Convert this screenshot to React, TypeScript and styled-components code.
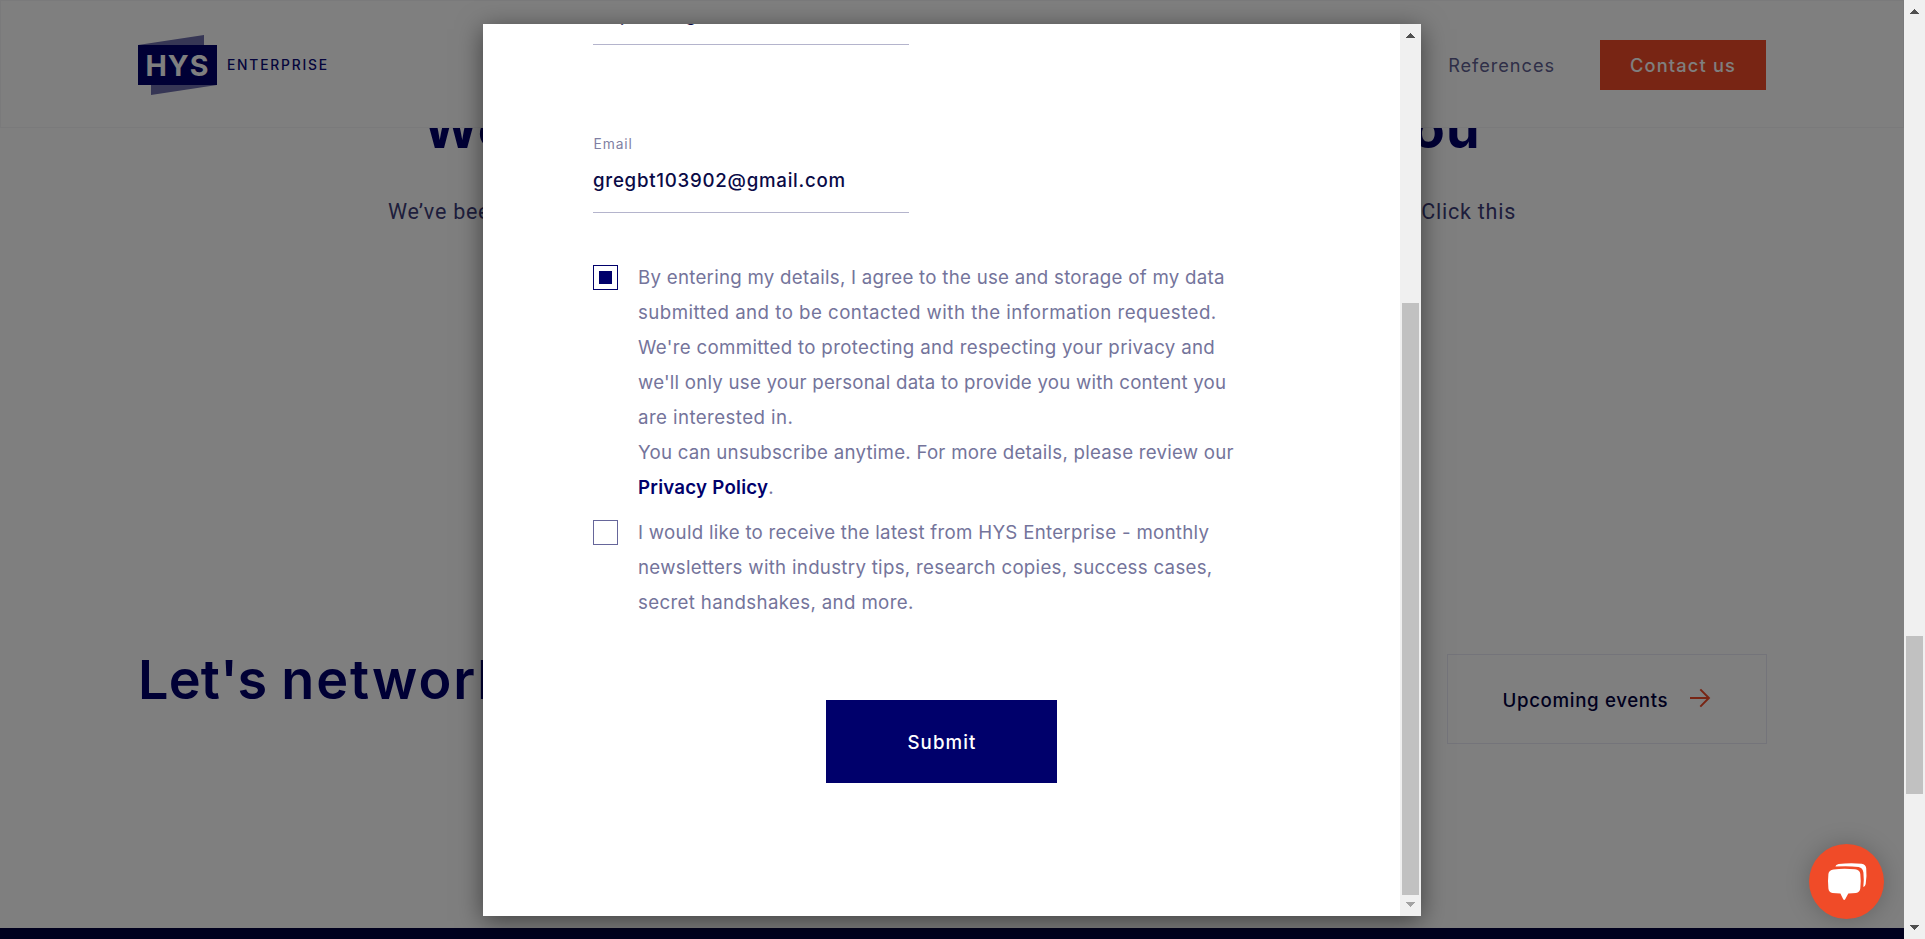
import React from "react";
import styled, { createGlobalStyle } from "styled-components";

const GlobalStyle = createGlobalStyle`
  *, *::before, *::after { box-sizing: border-box; }
  body {
    margin: 0;
    overflow: hidden;
    background: #fff;
    font-family: Inter, Roboto, "Liberation Sans", sans-serif;
  }
  h1, h2, p { margin: 0; }
`;

const NAVY = "#00006b";
const ORANGE = "#f04b28";

const Window = styled.div`
  display: flex;
  width: 1925px;
  height: 939px;
`;

const Page = styled.div`
  position: relative;
  flex: 1;
  display: flex;
  flex-direction: column;
  overflow: hidden;
  background: #fff;
`;

/* ---------- header ---------- */

const Header = styled.header`
  flex: none;
  display: flex;
  align-items: center;
  height: 128px;
  padding: 2px 137px 0;
  border: 1px solid #f5f5f7;
`;

const Brand = styled.a`
  display: flex;
  align-items: center;
  gap: 10px;
`;

const BrandName = styled.span`
  font-size: 13.8px;
  font-weight: 500;
  line-height: 16px;
  letter-spacing: 1.8px;
  color: #0a0a78;
`;

const Nav = styled.nav`
  display: flex;
  align-items: center;
  gap: 45px;
  margin-left: auto;
`;

const NavLink = styled.a`
  font-size: 18.2px;
  line-height: 24px;
  letter-spacing: 0.95px;
  color: #5f5f91;
`;

const ContactButton = styled.a`
  display: flex;
  align-items: center;
  justify-content: center;
  width: 166px;
  height: 50px;
  background: ${ORANGE};
  color: #fff;
  font-size: 18.2px;
  font-weight: 500;
  line-height: 24px;
  letter-spacing: 1.2px;
`;

/* ---------- page content ---------- */

const Main = styled.main`
  flex: 1;
  overflow: hidden;
`;

const HeroTitle = styled.h1`
  display: flex;
  justify-content: space-between;
  width: 1058px;
  margin: -34px 0 0 423px;
  color: ${NAVY};
  font-size: 54px;
  font-weight: 700;
  line-height: 70px;
  letter-spacing: 1.3px;
  white-space: nowrap;
`;

const HeroLead = styled.p`
  display: flex;
  justify-content: space-between;
  width: 1128px;
  margin: 30px 0 0 388px;
  color: #3c3c78;
  font-family: Roboto, "Liberation Sans", sans-serif;
  font-size: 21.5px;
  line-height: 35px;
  letter-spacing: 0.75px;
  white-space: nowrap;
`;

const Network = styled.section`
  display: flex;
  align-items: flex-start;
  justify-content: space-between;
  margin-top: 425px;
  padding: 0 137px 0 138px;
`;

const NetworkTitle = styled.h2`
  margin-top: -9px;
  color: ${NAVY};
  font-size: 54px;
  font-weight: 600;
  line-height: 70px;
`;

const Word = styled.span<{ $tracking: number }>`
  letter-spacing: ${(p) => p.$tracking}px;
`;

const EventsLink = styled.a`
  display: flex;
  align-items: center;
  gap: 21px;
  width: 320px;
  height: 90px;
  padding-left: 54.5px;
  border: 1px solid #e8e8f4;
  color: #00003c;
  font-size: 18.7px;
  font-weight: 500;
  line-height: 23px;
  letter-spacing: 0.65px;
  span { padding-top: 3px; }
  svg { margin-bottom: 2px; }
`;

const Footer = styled.footer`
  flex: none;
  height: 11px;
  background: #00003c;
`;

/* ---------- modal ---------- */

const Backdrop = styled.div`
  position: absolute;
  inset: 0;
  display: flex;
  align-items: flex-start;
  justify-content: center;
  padding-top: 24px;
  background: rgba(0, 0, 0, 0.5);
`;

const Modal = styled.div`
  display: flex;
  width: 938px;
  height: 892px;
  background: #fff;
  box-shadow: 0 5px 24px rgba(0, 0, 0, 0.5);
`;

const ModalBody = styled.form`
  flex: 1;
  display: flex;
  flex-direction: column;
  overflow: hidden;
  padding-left: 110px;
`;

const Field = styled.label<{ $scrolledOut?: boolean }>`
  flex: none;
  display: flex;
  flex-direction: column;
  gap: ${(p) => (p.$scrolledOut ? 11 : 9)}px;
  width: 316px;
  height: 79px;
  margin-top: ${(p) => (p.$scrolledOut ? -58 : 89)}px;
  border-bottom: 1px solid #b4b4cc;
`;

const FieldLabel = styled.span`
  padding-left: 0.5px;
  font-size: 13.8px;
  line-height: 20px;
  letter-spacing: 0.9px;
  color: #7f7fa3;
`;

const FieldValue = styled.span`
  font-size: 18.7px;
  font-weight: 500;
  line-height: 35px;
  letter-spacing: 0.73px;
  color: #0a0a46;
`;

const Consents = styled.div`
  flex: none;
  display: flex;
  flex-direction: column;
  gap: 10px;
  margin-top: 47px;
`;

const Consent = styled.label`
  display: flex;
  gap: 20px;
`;

const Checkbox = styled.span<{ $checked?: boolean }>`
  flex: none;
  display: flex;
  align-items: center;
  justify-content: center;
  width: 25px;
  height: 25px;
  margin-top: 5px;
  border: 1px solid ${(p) => (p.$checked ? NAVY : "#66669a")};
  &::after {
    content: "";
    width: 13px;
    height: 13px;
    background: ${(p) => (p.$checked ? NAVY : "transparent")};
  }
`;

const ConsentText = styled.span`
  display: flex;
  flex-direction: column;
  color: #74749b;
  font-size: 18.7px;
  line-height: 35px;
  white-space: nowrap;
`;

const Line = styled.span<{ $tracking: number }>`
  letter-spacing: ${(p) => p.$tracking}px;
`;

const PolicyLink = styled.a`
  color: ${NAVY};
  font-weight: 600;
`;

const SubmitButton = styled.button`
  flex: none;
  width: 231px;
  height: 83px;
  margin: 80px 0 0 233px;
  padding: 2px 0 0 1px;
  border: 0;
  background: ${NAVY};
  color: #fff;
  font-family: inherit;
  font-size: 18.7px;
  font-weight: 500;
  line-height: 35px;
  letter-spacing: 1.1px;
`;

/* ---------- scrollbars ---------- */

const Track = styled.div`
  flex: none;
  display: flex;
  flex-direction: column;
  align-items: center;
  width: 21px;
  padding: 9px 0;
  background: #f0f0f0;
  svg { display: block; }
`;

const Thumb = styled.div<{ $offset: number; $length: number }>`
  width: 17px;
  height: ${(p) => p.$length}px;
  margin: ${(p) => p.$offset}px 0 auto;
  background: #c1c1c1;
`;

/* ---------- chat ---------- */

const ChatButton = styled.div`
  position: absolute;
  right: 20px;
  bottom: 20px;
  display: flex;
  align-items: center;
  justify-content: center;
  width: 75px;
  height: 75px;
  border-radius: 50%;
  background: ${ORANGE};
  box-shadow: 0 1px 24px rgba(0, 0, 0, 0.22);
`;

function Logo() {
  return (
    <svg width="79" height="60" viewBox="0 0 79 60">
      <path d="M0 10 66 0v12H0zM13 48v12l66-10v-2z" fill="#6d6daa" />
      <path d="M0 10h79v40H0z" fill="#00006b" />
      <text
        x="7.4"
        y="40.6"
        fill="#fff"
        fontFamily="Inter"
        fontWeight="700"
        fontSize="28.6"
        letterSpacing="1.1"
      >
        HYS
      </text>
    </svg>
  );
}

function ArrowRight() {
  return (
    <svg width="22" height="20" viewBox="0 0 22 20" fill="none" stroke={ORANGE} strokeWidth="2">
      <path d="M1 10h18.6M11.3 1.4l8.6 8.6-8.6 8.6" />
    </svg>
  );
}

function ChatIcon() {
  return (
    <svg width="75" height="75" viewBox="0 0 75 75" fill="#fff">
      <path d="M24.5 25.4Q35 24.2 46 25.3 50.8 25.8 51.3 30 52.2 37 51.3 44.5 50.8 48.4 47 49 43.5 49.4 39.3 49.6L36.2 55.2Q35.2 56.6 34.2 55.2L31.4 49.6Q27 49.4 23.5 49 19.8 48.4 19.4 44.5 18.6 37 19.4 30 19.9 26 24.5 25.4Z" />
      <path d="M26.4 22.6Q26.6 20.5 29.6 20 41 18.6 52.6 19.7 56.8 20.2 57.2 24.2 58 32 56.7 40 56.2 42.8 54.3 43 55.2 36 54.4 28.5 53.8 23.8 49.6 22.9 38 21.6 26.4 22.6Z" />
    </svg>
  );
}

function Scrollbar({ offset, length, atEnd }: { offset: number; length: number; atEnd?: boolean }) {
  return (
    <Track>
      <svg width="9" height="5" shapeRendering="crispEdges">
        <path d="M4 0h1v1h1v1h1v1h1v1h1v1H0V4h1V3h1V2h1V1h1z" fill="#505050" />
      </svg>
      <Thumb $offset={offset} $length={length} />
      <svg width="9" height="5" shapeRendering="crispEdges">
        <path d="M4 5h1V4h1V3h1V2h1V1h1V0H0v1h1v1h1v1h1v1h1z" fill={atEnd ? "#a3a3a3" : "#505050"} />
      </svg>
    </Track>
  );
}

const detailsLines: [string, number][] = [
  ["By entering my details, I agree to the use and storage of my data", 0.26],
  ["submitted and to be contacted with the information requested.", 0.47],
  ["We're committed to protecting and respecting your privacy and", 0.32],
  ["we'll only use your personal data to provide you with content you", 0.22],
  ["are interested in.", 0.42],
  ["You can unsubscribe anytime. For more details, please review our", 0.24],
];

const newsletterLines: [string, number][] = [
  ["I would like to receive the latest from HYS Enterprise - monthly", 0.28],
  ["newsletters with industry tips, research copies, success cases,", 0.29],
  ["secret handshakes, and more.", 0.35],
];

export default function App() {
  return (
    <Window>
      <GlobalStyle />
      <Page>
        <Header>
          <Brand>
            <Logo />
            <BrandName>ENTERPRISE</BrandName>
          </Brand>
          <Nav>
            <NavLink>References</NavLink>
            <ContactButton>Contact us</ContactButton>
          </Nav>
        </Header>
        <Main>
          <HeroTitle>
            <span>We have</span>
            <span>for you</span>
          </HeroTitle>
          <HeroLead>
            <span>We’ve been sharing</span>
            <span>insights. Click this</span>
          </HeroLead>
          <Network>
            <NetworkTitle>
              <Word $tracking={0.2}>Let's </Word>
              <Word $tracking={1.9}>network</Word>
            </NetworkTitle>
            <EventsLink>
              <span>Upcoming events</span>
              <ArrowRight />
            </EventsLink>
          </Network>
        </Main>
        <Footer />
        <Backdrop>
          <Modal>
            <ModalBody>
              <Field $scrolledOut>
                <FieldLabel>Name</FieldLabel>
                <FieldValue>Hope Yang</FieldValue>
              </Field>
              <Field>
                <FieldLabel>Email</FieldLabel>
                <FieldValue>gregbt103902@gmail.com</FieldValue>
              </Field>
              <Consents>
                <Consent>
                  <Checkbox $checked />
                  <ConsentText>
                    {detailsLines.map(([text, tracking]) => (
                      <Line key={text} $tracking={tracking}>{text}</Line>
                    ))}
                    <Line $tracking={0.24}>
                      <PolicyLink>Privacy Policy</PolicyLink>.
                    </Line>
                  </ConsentText>
                </Consent>
                <Consent>
                  <Checkbox />
                  <ConsentText>
                    {newsletterLines.map(([text, tracking]) => (
                      <Line key={text} $tracking={tracking}>{text}</Line>
                    ))}
                  </ConsentText>
                </Consent>
              </Consents>
              <SubmitButton type="button">Submit</SubmitButton>
            </ModalBody>
            <Scrollbar offset={265} length={592} atEnd />
          </Modal>
        </Backdrop>
        <ChatButton>
          <ChatIcon />
        </ChatButton>
      </Page>
      <Scrollbar offset={622} length={158} />
    </Window>
  );
}
